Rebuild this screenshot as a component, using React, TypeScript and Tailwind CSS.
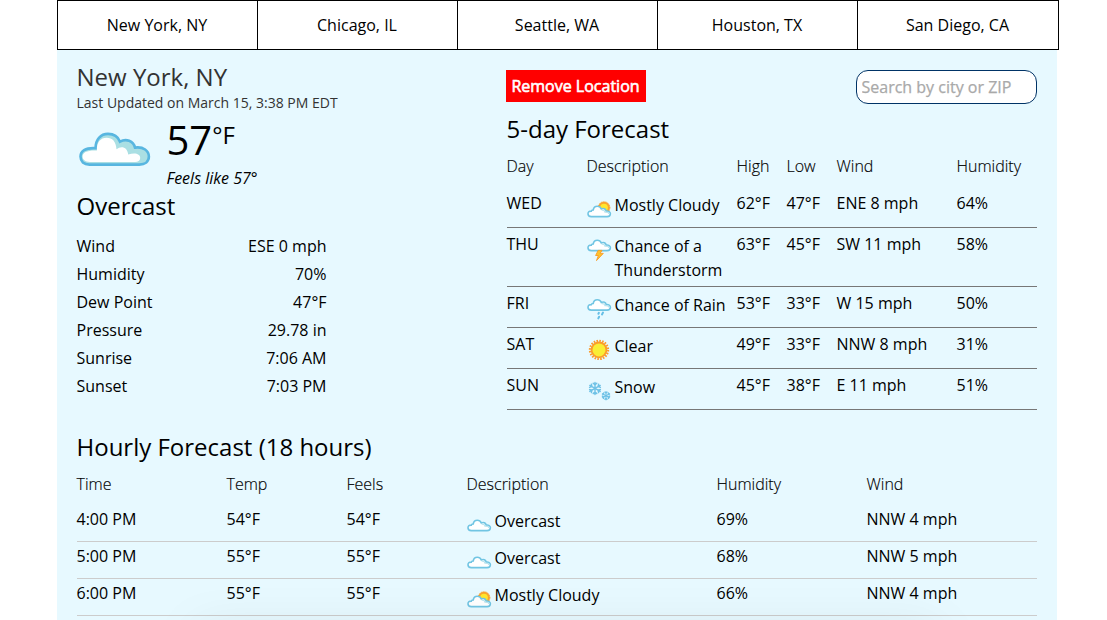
import type { ReactNode } from 'react';

type Kind = 'cloud' | 'mostly' | 'thunder' | 'rain' | 'sun' | 'snow';

function Flake({ x, y, r, width }: { x: number; y: number; r: number; width: number }) {
  return (
    <g transform={`translate(${x} ${y}) scale(${r / 6})`} stroke="#6fc2e6" strokeWidth={width} fill="none" strokeLinecap="round">
      {[0, 60, 120, 180, 240, 300].map((a) => (
        <path key={a} transform={`rotate(${a})`} d="M0 0V-6M-1.8 -5.2L0 -3.6L1.8 -5.2" />
      ))}
    </g>
  );
}

function SmallCloud({ y = 0 }: { y?: number }) {
  return (
    <g transform={`translate(0 ${y})`}>
      <path
        d="M4.3 20.6C2.3 20.6 1 19.4 1 17.8C1 16 2.4 15 4.3 15.1C4.5 14.3 5.2 13.9 6.2 14C6.6 11.7 8.2 10.3 10.3 10.3C12.3 10.3 13.6 11.3 14.3 12.9C16.5 12 18.7 12.8 19.2 15.1C21.6 14.8 23.4 15.9 23.4 17.8C23.4 19.5 22 20.6 20.1 20.6Z"
        fill="#fff"
        stroke="#71c5e3"
        strokeWidth="1.6"
      />
      <path d="M14.6 14.2C16.6 13.8 17.7 14.7 18 16.2C20.4 16.1 21.9 16.6 22 18" fill="none" stroke="#b8e3ee" strokeWidth="1.3" />
    </g>
  );
}

function WeatherIcon({ kind }: { kind: Kind }) {
  return (
    <svg viewBox="0 0 25 26" className="mt-[3px] ml-[0.5px] h-[26px] w-[25px] shrink-0">
      {kind === 'cloud' && <SmallCloud y={-2} />}
      {kind === 'mostly' && (
        <>
          <circle cx="17" cy="11.6" r="4.9" fill="#ffe62e" stroke="#fba32d" strokeWidth="2" />
          <circle cx="17" cy="11.6" r="5.9" fill="none" stroke="#fba32d" strokeDasharray="1.2 1" />
          <SmallCloud />
        </>
      )}
      {kind === 'thunder' && (
        <>
          <SmallCloud y={-7} />
          <path d="M11.2 13.4H15L13.1 16.4H16.3L9.5 23.6L11.4 18.5H8.6Z" fill="#ffc42d" stroke="#f89b27" strokeWidth="0.9" />
        </>
      )}
      {kind === 'rain' && (
        <>
          <SmallCloud y={-6.5} />
          <path d="M11.9 16.8L11.4 17.8M16 16.6L15 18.4M12.1 20.7L11.3 22.4" stroke="#66bfe6" strokeWidth="2" strokeLinecap="round" />
        </>
      )}
      {kind === 'sun' && (
        <>
          <circle cx="12" cy="12.9" r="9.1" fill="none" stroke="#fb9d2b" strokeWidth="2.2" strokeDasharray="1.6 1.26" />
          <circle cx="12" cy="12.9" r="7.4" fill="#f9ee35" stroke="#fb9d2b" strokeWidth="1.8" />
        </>
      )}
      {kind === 'snow' && (
        <>
          <Flake x={8} y={10.4} r={6} width={1.45} />
          <Flake x={19} y={17.7} r={4.1} width={1.7} />
        </>
      )}
    </svg>
  );
}

function BigCloud() {
  return (
    <svg viewBox="0 0 74 38" className="h-[38px] w-[74px]">
      <path
        d="M11.5 33.6C5.8 33.6 2.5 30.5 2.5 25.6C2.5 20.2 7 16.6 17.7 17.2C17.2 8.6 22.8 2.9 30 2.9C35.6 2.9 40 5.6 42 10.7C48 7.2 55.4 9.8 57 16.6C65.4 15.4 70.9 19.8 70.9 25.6C70.9 30.5 67 33.6 61.3 33.6Z"
        fill="#aadfe3"
        stroke="#58b6e0"
        strokeWidth="2.6"
      />
      <path
        d="M12 30.9C7 30.9 4.6 28.7 4.6 25.6C4.6 21.5 9 19.2 18.9 19.6C18.4 11.4 22.6 6.7 28.6 6.7C34.4 6.7 38 10.5 38.5 18.2C43.2 14.2 49.6 16 50.2 23.6C56.6 21.2 62.2 22.6 62.2 27C62.2 29.6 60 30.9 57 30.9Z"
        fill="#fff"
      />
    </svg>
  );
}

const cities = ['New York, NY', 'Chicago, IL', 'Seattle, WA', 'Houston, TX', 'San Diego, CA'];

const conditions = [
  ['Wind', 'ESE 0 mph'],
  ['Humidity', '70%'],
  ['Dew Point', '47°F'],
  ['Pressure', '29.78 in'],
  ['Sunrise', '7:06 AM'],
  ['Sunset', '7:03 PM'],
];

const days: { day: string; kind: Kind; text: string; high: string; low: string; wind: string; humidity: string }[] = [
  { day: 'WED', kind: 'mostly', text: 'Mostly Cloudy', high: '62°F', low: '47°F', wind: 'ENE 8 mph', humidity: '64%' },
  { day: 'THU', kind: 'thunder', text: 'Chance of a Thunderstorm', high: '63°F', low: '45°F', wind: 'SW 11 mph', humidity: '58%' },
  { day: 'FRI', kind: 'rain', text: 'Chance of Rain', high: '53°F', low: '33°F', wind: 'W 15 mph', humidity: '50%' },
  { day: 'SAT', kind: 'sun', text: 'Clear', high: '49°F', low: '33°F', wind: 'NNW 8 mph', humidity: '31%' },
  { day: 'SUN', kind: 'snow', text: 'Snow', high: '45°F', low: '38°F', wind: 'E 11 mph', humidity: '51%' },
];

const hours: { time: string; temp: string; kind: Kind; text: string; humidity: string; wind: string }[] = [
  { time: '4:00 PM', temp: '54°F', kind: 'cloud', text: 'Overcast', humidity: '69%', wind: 'NNW 4 mph' },
  { time: '5:00 PM', temp: '55°F', kind: 'cloud', text: 'Overcast', humidity: '68%', wind: 'NNW 5 mph' },
  { time: '6:00 PM', temp: '55°F', kind: 'mostly', text: 'Mostly Cloudy', humidity: '66%', wind: 'NNW 4 mph' },
];

function Description({ kind, children }: { kind: Kind; children: ReactNode }) {
  return (
    <div className="flex items-start pt-0.5">
      <WeatherIcon kind={kind} />
      <span className="ml-[2.5px] flex-1">{children}</span>
    </div>
  );
}

export default function App() {
  return (
    <div className="h-[620px] overflow-hidden bg-white pl-[56.5px] font-['Open_Sans',sans-serif] text-base leading-6 text-black">
      <nav className="flex h-[50px] w-[1002px] border border-black bg-white">
        {cities.map((city, i) => (
          <a key={city} className={`flex items-center justify-center ${i < 4 ? 'w-[200px] border-r border-black' : 'flex-1'}`}>
            {city}
          </a>
        ))}
      </nav>

      <main className="relative h-[570px] w-[1000px] overflow-hidden bg-[#e7f9ff] px-5">
        <div className="flex h-[375px] justify-between">
          <section className="w-[280px]">
            <h1 className="pt-[11px] text-2xl leading-8 text-[#333]">New York, NY</h1>
            <p className="text-sm leading-5 text-[#333]">Last Updated on March 15, 3:38 PM EDT</p>
            <div className="flex h-[76px]">
              <div className="w-[90px] pt-[18px] pl-[1.5px]">
                <BigCloud />
              </div>
              <div>
                <div className="flex h-[53px]">
                  <span className="text-[40px] leading-[53px]">57</span>
                  <span className="text-2xl leading-[44px]">°F</span>
                </div>
                <p className="italic">Feels like 57°</p>
              </div>
            </div>
            <h2 className="pt-px text-2xl leading-8">Overcast</h2>
            <dl className="mt-2.5 w-[250px] leading-7">
              {conditions.map(([label, value]) => (
                <div key={label} className="flex justify-between">
                  <dt>{label}</dt>
                  <dd>{value}</dd>
                </div>
              ))}
            </dl>
          </section>

          <section className="w-[531px] pt-5">
            <div className="flex h-[35px] items-start justify-between">
              <button className="h-8 w-[140px] bg-[red] text-center text-white [-webkit-text-stroke:0.6px_white]">Remove Location</button>
              <input
                className="h-[34px] w-[181px] rounded-xl border border-[#003366] bg-white pl-[5px] [-webkit-text-stroke:0.25px] placeholder:text-[#a9a9a9]"
                placeholder="Search by city or ZIP"
              />
            </div>
            <div className="pl-px">
              <h2 className="pt-2 text-2xl leading-8">5-day Forecast</h2>
              <div className="mt-[9px] grid h-[33px] grid-cols-[80px_150px_50px_50px_120px_80px] font-light [-webkit-text-stroke:0.15px]">
                <span>Day</span>
                <span>Description</span>
                <span>High</span>
                <span>Low</span>
                <span>Wind</span>
                <span>Humidity</span>
              </div>
              {days.map((d) => (
                <div key={d.day} className="grid min-h-[41px] grid-cols-[80px_150px_50px_50px_120px_80px] border-b border-[#777] pt-1 pb-1">
                  <span>{d.day}</span>
                  <Description kind={d.kind}>{d.text}</Description>
                  <span>{d.high}</span>
                  <span>{d.low}</span>
                  <span>{d.wind}</span>
                  <span>{d.humidity}</span>
                </div>
              ))}
            </div>
          </section>
        </div>

        <section>
          <h2 className="pt-1.5 text-2xl leading-8">Hourly Forecast (18 hours)</h2>
          <div className="mt-[9px] grid h-[33px] grid-cols-[150px_120px_120px_250px_150px_170px] font-light [-webkit-text-stroke:0.15px]">
            <span>Time</span>
            <span>Temp</span>
            <span>Feels</span>
            <span>Description</span>
            <span>Humidity</span>
            <span>Wind</span>
          </div>
          {hours.map((h) => (
            <div key={h.time} className="grid h-[37px] grid-cols-[150px_120px_120px_250px_150px_170px] border-b border-[#ccc] pt-0.5">
              <span>{h.time}</span>
              <span>{h.temp}</span>
              <span>{h.temp}</span>
              <Description kind={h.kind}>{h.text}</Description>
              <span>{h.humidity}</span>
              <span>{h.wind}</span>
            </div>
          ))}
        </section>

        <div className="pointer-events-none absolute -bottom-5 left-[140px] h-2.5 w-[740px] shadow-[0_10px_50px_rgba(0,0,0,0.28)]" />
      </main>
    </div>
  );
}
